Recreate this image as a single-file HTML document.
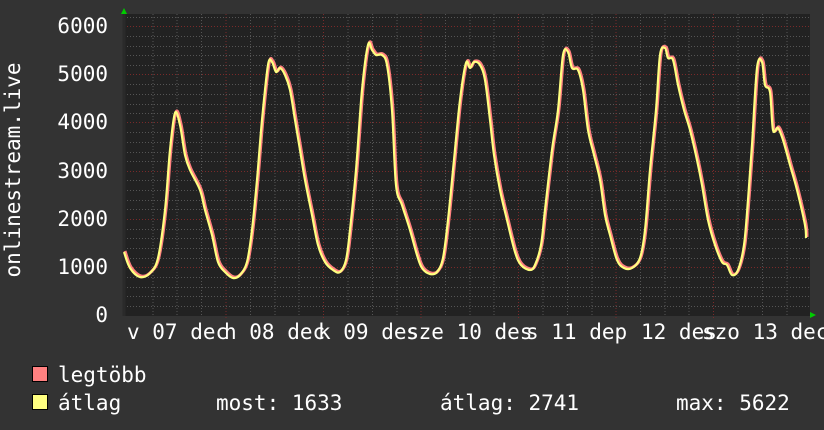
<!DOCTYPE html>
<html><head><meta charset="utf-8"><style>
html,body{margin:0;padding:0;background:#333;}
svg{display:block}
text{font-family:"DejaVu Sans Mono","Liberation Mono",monospace;fill:#fff;font-size:21px}
</style></head><body>
<svg id="s" width="824" height="430" viewBox="0 0 824 430" xmlns="http://www.w3.org/2000/svg">
<rect width="824" height="430" fill="#333"/>
<rect x="124" y="14" width="686" height="302" fill="#222"/>
<g stroke="#555" stroke-width="1" stroke-dasharray="1,2">
<line x1="124" x2="810" y1="36.5" y2="36.5"/><line x1="124" x2="810" y1="46.5" y2="46.5"/><line x1="124" x2="810" y1="55.5" y2="55.5"/><line x1="124" x2="810" y1="65.5" y2="65.5"/>
<line x1="124" x2="810" y1="84.5" y2="84.5"/><line x1="124" x2="810" y1="94.5" y2="94.5"/><line x1="124" x2="810" y1="104.5" y2="104.5"/><line x1="124" x2="810" y1="113.5" y2="113.5"/>
<line x1="124" x2="810" y1="132.5" y2="132.5"/><line x1="124" x2="810" y1="142.5" y2="142.5"/><line x1="124" x2="810" y1="152.5" y2="152.5"/><line x1="124" x2="810" y1="161.5" y2="161.5"/>
<line x1="124" x2="810" y1="180.5" y2="180.5"/><line x1="124" x2="810" y1="190.5" y2="190.5"/><line x1="124" x2="810" y1="200.5" y2="200.5"/><line x1="124" x2="810" y1="209.5" y2="209.5"/>
<line x1="124" x2="810" y1="229.5" y2="229.5"/><line x1="124" x2="810" y1="238.5" y2="238.5"/><line x1="124" x2="810" y1="248.5" y2="248.5"/><line x1="124" x2="810" y1="258.5" y2="258.5"/>
<line x1="124" x2="810" y1="277.5" y2="277.5"/><line x1="124" x2="810" y1="287.5" y2="287.5"/><line x1="124" x2="810" y1="296.5" y2="296.5"/><line x1="124" x2="810" y1="306.5" y2="306.5"/>
<line x1="124" x2="810" y1="17.5" y2="17.5"/>
</g>
<g stroke="#555" stroke-width="1" stroke-dasharray="1,2">
<line x1="153" x2="153" y1="14" y2="316"/><line x1="177" x2="177" y1="14" y2="316"/><line x1="201.5" x2="201.5" y1="14" y2="316"/>
<line x1="250.5" x2="250.5" y1="14" y2="316"/><line x1="275" x2="275" y1="14" y2="316"/><line x1="299" x2="299" y1="14" y2="316"/>
<line x1="348" x2="348" y1="14" y2="316"/><line x1="372.5" x2="372.5" y1="14" y2="316"/><line x1="397" x2="397" y1="14" y2="316"/>
<line x1="445.5" x2="445.5" y1="14" y2="316"/><line x1="470" x2="470" y1="14" y2="316"/><line x1="494" x2="494" y1="14" y2="316"/>
<line x1="543" x2="543" y1="14" y2="316"/><line x1="567.5" x2="567.5" y1="14" y2="316"/><line x1="592" x2="592" y1="14" y2="316"/>
<line x1="640.5" x2="640.5" y1="14" y2="316"/><line x1="665" x2="665" y1="14" y2="316"/><line x1="689" x2="689" y1="14" y2="316"/>
<line x1="738" x2="738" y1="14" y2="316"/><line x1="762.5" x2="762.5" y1="14" y2="316"/><line x1="787" x2="787" y1="14" y2="316"/>
</g>
<g stroke="#7a2a2a" stroke-width="1" stroke-dasharray="1,2">
<line x1="124" x2="810" y1="26.5" y2="26.5"/><line x1="124" x2="810" y1="74.5" y2="74.5"/><line x1="124" x2="810" y1="122.5" y2="122.5"/>
<line x1="124" x2="810" y1="171.5" y2="171.5"/><line x1="124" x2="810" y1="219.5" y2="219.5"/><line x1="124" x2="810" y1="267.5" y2="267.5"/>
<line x1="226" x2="226" y1="14" y2="318"/><line x1="323.5" x2="323.5" y1="14" y2="318"/><line x1="421" x2="421" y1="14" y2="318"/>
<line x1="518.5" x2="518.5" y1="14" y2="318"/><line x1="616" x2="616" y1="14" y2="318"/><line x1="713.5" x2="713.5" y1="14" y2="318"/>
</g>
<line x1="124" x2="124" y1="14" y2="316" stroke="#2a2a2a" stroke-width="3"/>
<polygon points="121,14 127,14 124,8" fill="#0c0"/>
<polygon points="810,312 810,318 816,315" fill="#0c0"/>
<path id="pr" fill="none" stroke="#ff8080" stroke-width="3" stroke-linejoin="round" transform="translate(1,-1)" d=""/>
<path id="py" fill="none" stroke="#ffff80" stroke-width="2.2" stroke-linejoin="round" d=""/>
<g text-anchor="end">
<text x="108" y="33">6000</text><text x="108" y="81">5000</text><text x="108" y="129">4000</text>
<text x="108" y="178">3000</text><text x="108" y="226">2000</text><text x="108" y="274">1000</text><text x="108" y="322">0</text>
</g>
<text transform="translate(20,170) rotate(-90)" text-anchor="middle">onlinestream.live</text>
<text x="127" y="339">v 07 dec</text>
<text x="224" y="339">h 08 dec</text>
<text x="318" y="339">k 09 des</text>
<text x="406" y="339">sze 10 des</text>
<text x="526" y="339">s 11 dep</text>
<text x="641" y="339">12 des</text>
<text x="702" y="339">szo 13 dec</text>
<rect x="32.5" y="366.5" width="15" height="15" fill="#ff8080" stroke="#000"/>
<rect x="32.5" y="394.5" width="15" height="15" fill="#ffff80" stroke="#000"/>
<text x="58" y="382">legtöbb</text>
<text x="58" y="410">átlag</text>
<text x="216" y="410">most: 1633</text>
<text x="440" y="410">átlag: 2741</text>
<text x="676" y="410">max: 5622</text>
</svg>
<script>
var a=[124,252,130,268,140,277,150,273,158,258,165,210,170,150,175,113,180,125,185,155,190,170,200,190,205,210,212,235,218,262,225,272,233,278,240,275,247,262,252,230,257,180,262,120,268,65,272,62,276,72,280,68,285,75,290,90,295,120,300,150,305,180,312,215,318,245,325,262,333,270,340,272,346,260,350,230,356,170,362,90,368,45,372,50,376,55,382,55,387,65,392,110,396,185,402,205,410,230,417,255,422,268,430,274,437,272,443,258,448,220,454,160,460,100,466,63,470,68,474,62,480,65,485,80,490,120,494,155,500,190,507,220,515,252,521,265,530,270,535,265,541,245,545,210,552,150,558,110,563,55,568,52,572,68,578,70,583,90,588,130,594,155,600,180,605,215,610,235,617,260,624,268,632,268,640,258,645,230,650,170,656,110,660,55,665,48,668,58,673,60,678,85,684,110,690,130,697,160,702,185,708,220,715,245,722,262,727,265,732,275,738,270,744,245,748,200,752,145,757,68,762,62,765,85,770,92,773,130,778,128,783,140,790,165,797,190,805,225,806,238];
var p=[];for(var i=0;i<a.length;i+=2)p.push([a[i],a[i+1]]);
var d="M"+p[0][0]+","+p[0][1];
for(var i=0;i<p.length-1;i++){var p0=p[Math.max(i-1,0)],p1=p[i],p2=p[i+1],p3=p[Math.min(i+2,p.length-1)];
d+=" C"+(p1[0]+(p2[0]-p0[0])/6)+","+(p1[1]+(p2[1]-p0[1])/6)+" "+(p2[0]-(p3[0]-p1[0])/6)+","+(p2[1]-(p3[1]-p1[1])/6)+" "+p2[0]+","+p2[1];}
document.getElementById("pr").setAttribute("d",d);document.getElementById("py").setAttribute("d",d);
</script>
</body></html>
